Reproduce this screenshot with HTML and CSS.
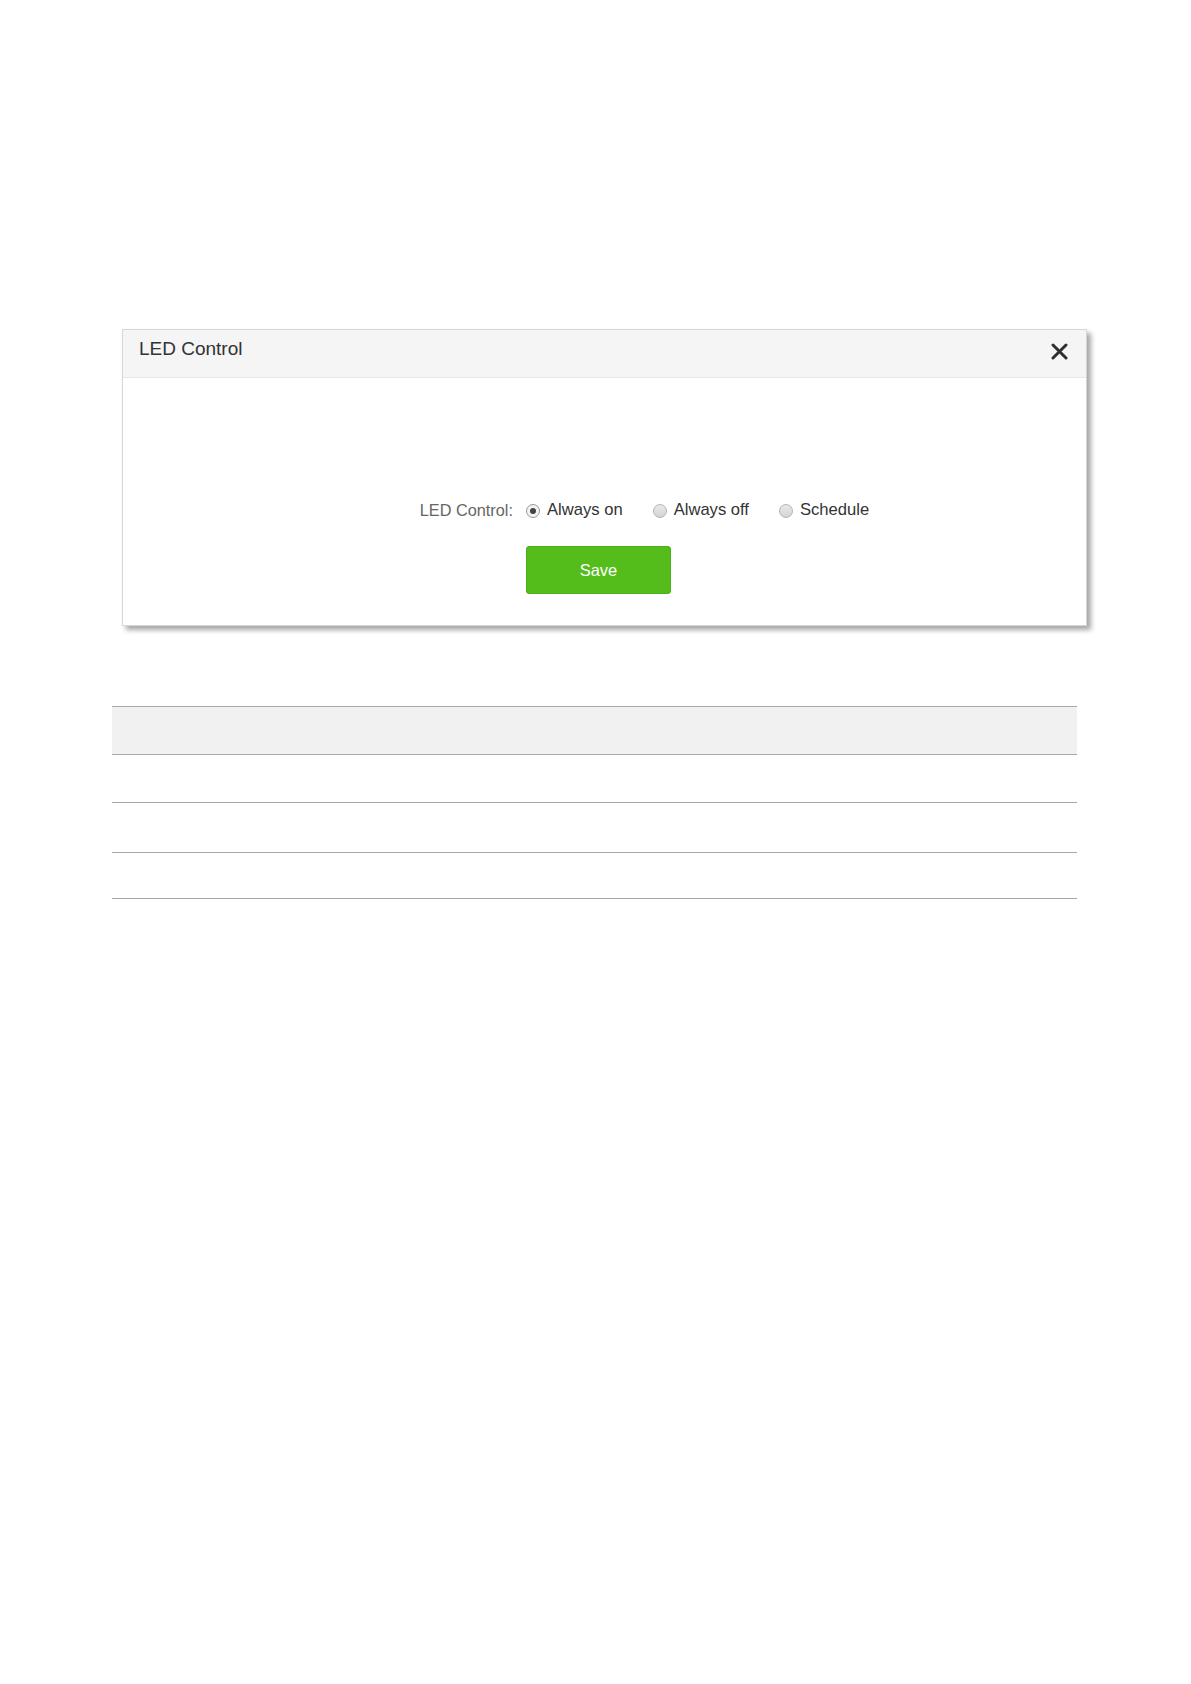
FILE: index.html
```html
<!DOCTYPE html>
<html lang="en">
<head>
  <meta charset="UTF-8" />
  <title>LED Control</title>
  <link rel="stylesheet" href="styles.css">
</head>
<body>
  <div class="dialog">
    <div class="dialog-header">
      <h2>LED Control</h2>
      <span class="close">
        <svg width="17" height="17" viewBox="0 0 17 17"><path d="M2 2 L15 15 M15 2 L2 15" stroke="#2f2f2f" stroke-width="3" stroke-linecap="round"/></svg>
      </span>
    </div>
    <div class="dialog-body">
      <div class="form-row">
        <label class="form-label">LED Control:</label>
        <div class="options">
          <label class="option"><span class="radio checked"></span>Always on</label>
          <label class="option"><span class="radio"></span>Always off</label>
          <label class="option"><span class="radio"></span>Schedule</label>
        </div>
      </div>
      <div class="form-row">
        <span></span>
        <div><button type="button">Save</button></div>
      </div>
    </div>
  </div>

  <div class="table">
    <div class="table-row head"></div>
    <div class="table-row"></div>
    <div class="table-row tall"></div>
    <div class="table-row last"></div>
  </div>
</body>
</html>
```

FILE: styles.css
```css
* {
  margin: 0;
  padding: 0;
  box-sizing: border-box;
}

body {
  font-family: 'Liberation Sans', Arial, sans-serif;
  background-color: #ffffff;
  padding-top: 329px;
}

.dialog {
  margin-left: 122px;
  width: 965px;
  height: 297px;
  border: 1px solid #d6d6d6;
  background-color: #ffffff;
  box-shadow: 4px 4px 5px rgba(0, 0, 0, 0.35);
}

.dialog-header {
  display: flex;
  justify-content: space-between;
  align-items: flex-start;
  height: 48px;
  background-color: #f5f5f5;
  border-bottom: 1px solid #e6e6e6;
  padding: 8px 18px 0 16px;
}

.dialog-header h2 {
  font-weight: 400;
  font-size: 19px;
  color: #333;
  line-height: 22px;
}

.close {
  display: block;
  margin-top: 5px;
}

.dialog-body {
  padding-top: 120px;
}

.form-row {
  display: grid;
  grid-template-columns: 390px 1fr;
  column-gap: 13px;
  align-items: center;
}

.form-row + .form-row {
  margin-top: 24px;
}

.form-label {
  text-align: right;
  font-size: 16.3px;
  color: #666;
  line-height: 24px;
}

.options {
  display: flex;
  gap: 30px;
}

.option {
  display: flex;
  align-items: center;
  font-size: 16.6px;
  color: #333;
  line-height: 24px;
}

.radio {
  width: 14px;
  height: 14px;
  border-radius: 50%;
  border: 1px solid #b4b4b4;
  background: linear-gradient(#e9e9e9, #d4d4d4);
  margin-right: 7px;
  margin-top: 2px;
  position: relative;
}

.radio.checked {
  background: #f2f2f2;
  border-color: #9a9a9a;
}

.radio.checked::after {
  content: "";
  position: absolute;
  left: 3px;
  top: 3px;
  width: 6px;
  height: 6px;
  border-radius: 50%;
  background-color: #444;
}

button {
  width: 145px;
  height: 48px;
  font-family: inherit;
  font-size: 16.5px;
  color: #ffffff;
  background-color: #54bd1b;
  border: 1px solid #4cae18;
  border-radius: 3px;
  cursor: pointer;
}

.table {
  margin: 80px 0 0 112px;
  width: 965px;
  border-top: 1px solid #a8a8a8;
}

.table-row {
  height: 48px;
  border-bottom: 1px solid #a8a8a8;
}

.table-row.head {
  background-color: #f1f1f1;
}

.table-row.tall {
  height: 50px;
}

.table-row.last {
  height: 46px;
}
```
